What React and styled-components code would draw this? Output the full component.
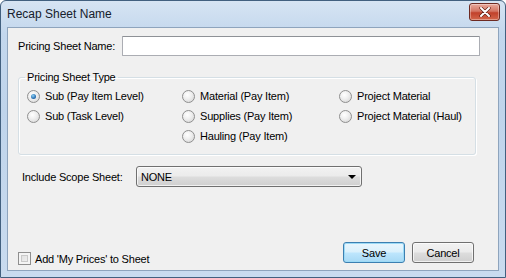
import React from 'react';
import styled, { createGlobalStyle } from 'styled-components';

const Global = createGlobalStyle`
  html, body {
    margin: 0;
    padding: 0;
    background: #ffffff;
  }
  * {
    box-sizing: border-box;
  }
`;

const Window = styled.div`
  width: 506px;
  height: 278px;
  display: flex;
  flex-direction: column;
  border: 1px solid #42607f;
  border-radius: 6px 6px 0 0;
  background: linear-gradient(180deg, #d6e4f3 0%, #c3d7ed 12%, #bfd4eb 40%, #c9dbef 100%);
  padding: 0 6px 6px 6px;
  font-family: 'Liberation Sans', Arial, sans-serif;
  font-size: 11px;
  letter-spacing: -0.2px;
  color: #000;
`;

const TitleBar = styled.div`
  height: 26px;
  display: flex;
  align-items: center;
  justify-content: space-between;
  padding: 0 0 3px 0;
`;

const Title = styled.span`
  font-size: 12px;
  letter-spacing: 0;
  color: #15202c;
  padding-top: 2px;
`;

const CloseButton = styled.div`
  width: 31px;
  height: 18px;
  margin-top: -2px;
  margin-right: -1px;
  border: 1px solid #6d2a22;
  border-radius: 3px;
  background: linear-gradient(180deg, #e9a99c 0%, #d47563 45%, #c1412b 55%, #d3664b 100%);
  display: flex;
  align-items: center;
  justify-content: center;
  box-shadow: inset 0 0 0 1px rgba(255, 255, 255, 0.35);
`;

const Client = styled.div`
  flex: 1;
  display: flex;
  flex-direction: column;
  background: #f0f0f0;
  border: 1px solid #8ea4bd;
  padding: 8px 18px 7px 10px;
`;

const FieldRow = styled.div`
  display: flex;
  align-items: center;
  margin-left: ${(p) => p.$indent || 0}px;
  margin-top: ${(p) => p.$top || 0}px;
`;

const Label = styled.label`
  width: ${(p) => p.$width}px;
  flex-shrink: 0;
`;

const TextInput = styled.div`
  flex: 1;
  height: 20px;
  background: #fff;
  border: 1px solid #abadb3;
  border-top-color: #8e9196;
  border-radius: 1px;
`;

const Group = styled.fieldset`
  margin: 15px 4px 0 0;
  padding: 3px 0 8px 8px;
  border: 1px solid #d5dfe5;
  border-radius: 3px;
  box-shadow: inset 1px 1px 0 #fff, 1px 1px 0 #fff;
  display: grid;
  grid-template-columns: 155px 157px 1fr;
  grid-auto-flow: column;
  grid-template-rows: repeat(3, 20px);
`;

const Legend = styled.legend`
  padding: 0 2px;
  margin-left: -2px;
`;

const RadioItem = styled.div`
  display: flex;
  align-items: center;
  gap: 5px;
  grid-column: ${(p) => p.$col};
  grid-row: ${(p) => p.$row};
`;

const RadioCircle = styled.span`
  width: 13px;
  height: 13px;
  border-radius: 50%;
  border: 1px solid #8f8f8f;
  background: radial-gradient(circle at 40% 35%, #ffffff 0%, #f0f0f0 40%, #d2d2d2 100%);
  display: flex;
  align-items: center;
  justify-content: center;
  flex-shrink: 0;

  &::after {
    content: '';
    width: 5px;
    height: 5px;
    border-radius: 50%;
    background: ${(p) => (p.$checked ? 'radial-gradient(circle at 40% 35%, #8fd2f5 0%, #2a71b3 60%, #15497f 100%)' : 'transparent')};
  }
`;

const Select = styled.div`
  width: 226px;
  height: 21px;
  border: 1px solid #707070;
  border-radius: 3px;
  background: linear-gradient(180deg, #f2f2f2 0%, #ebebeb 49%, #dddddd 51%, #cfcfcf 100%);
  display: flex;
  align-items: center;
  justify-content: space-between;
  padding: 0 5px 0 4px;
  box-shadow: inset 0 0 0 1px rgba(255, 255, 255, 0.7);
`;

const Arrow = styled.span`
  width: 0;
  height: 0;
  border-left: 4px solid transparent;
  border-right: 4px solid transparent;
  border-top: 4px solid #000;
  margin-top: 1px;
`;

const Footer = styled.div`
  margin-top: auto;
  display: flex;
  align-items: flex-end;
  justify-content: space-between;
`;

const CheckRow = styled.label`
  display: flex;
  align-items: center;
  gap: 4px;
  margin-bottom: -2px;
`;

const CheckBox = styled.span`
  width: 13px;
  height: 13px;
  border: 1px solid #8f8f8f;
  background: linear-gradient(135deg, #dcdcdc 0%, #f4f4f4 100%);
  box-shadow: inset 0 0 0 2px #f4f4f4, inset 0 0 0 3px #c9c9c9;
`;

const Buttons = styled.div`
  display: flex;
  gap: 7px;
  margin-right: 6px;
`;

const Button = styled.div`
  width: 62px;
  height: 21px;
  border-radius: 3px;
  display: flex;
  align-items: center;
  justify-content: center;
  font-size: 11px;
  border: 1px solid ${(p) => (p.$default ? '#3c7fb1' : '#707070')};
  background: ${(p) =>
    p.$default
      ? 'linear-gradient(180deg, #eaf6fd 0%, #d9f0fc 49%, #bee6fd 51%, #a7d9f5 100%)'
      : 'linear-gradient(180deg, #f2f2f2 0%, #ebebeb 49%, #dddddd 51%, #cfcfcf 100%)'};
  box-shadow: inset 0 0 0 1px ${(p) => (p.$default ? '#9cdaf6' : 'rgba(255,255,255,0.7)')};
`;

const radios = [
  { label: 'Sub (Pay Item Level)', col: 1, row: 1, checked: true },
  { label: 'Sub (Task Level)', col: 1, row: 2 },
  { label: 'Material (Pay Item)', col: 2, row: 1 },
  { label: 'Supplies (Pay Item)', col: 2, row: 2 },
  { label: 'Hauling (Pay Item)', col: 2, row: 3 },
  { label: 'Project Material', col: 3, row: 1 },
  { label: 'Project Material (Haul)', col: 3, row: 2 },
];

const App = () => (
  <>
    <Global />
    <Window>
      <TitleBar>
        <Title>Recap Sheet Name</Title>
        <CloseButton>
          <svg width="12" height="10" viewBox="0 0 12 10">
            <path d="M2 1 L10 9 M10 1 L2 9" stroke="#5a1a12" strokeWidth="3.2" strokeLinecap="round" />
            <path d="M2 1 L10 9 M10 1 L2 9" stroke="#fff" strokeWidth="2" strokeLinecap="round" />
          </svg>
        </CloseButton>
      </TitleBar>
      <Client>
        <FieldRow>
          <Label $width={104}>Pricing Sheet Name:</Label>
          <TextInput />
        </FieldRow>
        <Group>
          <Legend>Pricing Sheet Type</Legend>
          {radios.map((r) => (
            <RadioItem key={r.label} $col={r.col} $row={r.row}>
              <RadioCircle $checked={r.checked} />
              {r.label}
            </RadioItem>
          ))}
        </Group>
        <FieldRow $indent={4} $top={11}>
          <Label $width={114}>Include Scope Sheet:</Label>
          <Select>
            NONE
            <Arrow />
          </Select>
        </FieldRow>
        <Footer>
          <CheckRow>
            <CheckBox />
            Add 'My Prices' to Sheet
          </CheckRow>
          <Buttons>
            <Button $default>Save</Button>
            <Button>Cancel</Button>
          </Buttons>
        </Footer>
      </Client>
    </Window>
  </>
);

export default App;
